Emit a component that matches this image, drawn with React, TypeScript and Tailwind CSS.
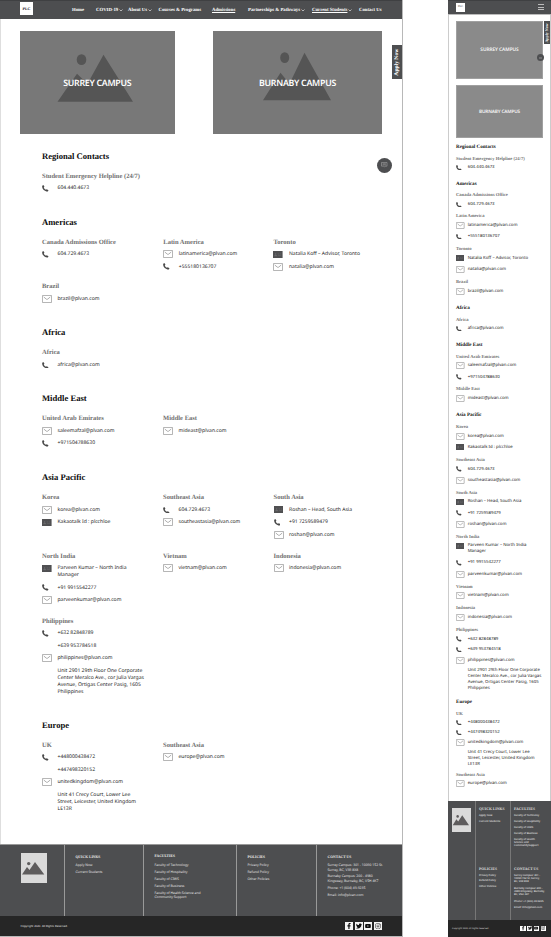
import React from "react";
import { FaFacebookF, FaTwitter, FaYoutube, FaInstagram } from "react-icons/fa";

type Kind = "phone" | "mail" | "card" | "none" | "phoneMobile";
type Item = { k: Kind; t: string[] };
type Group = { name: string; items: Item[]; m: string; row?: string };
type Section = { title: string; d: string; grid: string; m: string; groups: Group[] };

const ph = (...t: string[]): Item => ({ k: "phone", t });
const ml = (...t: string[]): Item => ({ k: "mail", t });
const cd = (...t: string[]): Item => ({ k: "card", t });
const no = (...t: string[]): Item => ({ k: "none", t });
const pm = (...t: string[]): Item => ({ k: "phoneMobile", t });

const sections: Section[] = [
  {
    title: "Regional Contacts", d: "h-[66px]", grid: "grid-cols-[121px_110.5px_110px]", m: "h-[36.8px]",
    groups: [{ name: "Student Emergency Helpline (24/7)", m: "h-[24px]", items: [ph("604.440.4673")] }],
  },
  {
    title: "Americas", d: "h-[110.5px]", grid: "grid-cols-[121.3px_110.2px_110px] grid-rows-[44.5px_30px]", m: "h-[124.2px]",
    groups: [
      { name: "Canada Admissions Office", m: "h-[21px]", items: [ph("604.729.4673")] },
      { name: "Latin America", m: "h-[33px]", items: [ml("latinamerica@plvan.com"), ph("+555180136707")] },
      { name: "Toronto", m: "h-[33px]", items: [cd("Natalia Koff – Advisor, Toronto"), ml("natalia@plvan.com")] },
      { name: "Brazil", m: "h-[24px]", items: [ml("brazil@plvan.com")] },
    ],
  },
  {
    title: "Africa", d: "h-[66px]", grid: "grid-cols-[121px_110.5px_110px]", m: "h-[37.3px]",
    groups: [{ name: "Africa", m: "h-[24px]", items: [ph("africa@plvan.com")] }],
  },
  {
    title: "Middle East", d: "h-[79px]", grid: "grid-cols-[121px_110.5px_110px]", m: "h-[70.3px]",
    groups: [
      { name: "United Arab Emirates", m: "h-[32.5px]", items: [ml("saleemafzal@plvan.com"), ph("+971504788630")] },
      { name: "Middle East", m: "h-[24px]", items: [ml("mideast@plvan.com")] },
    ],
  },
  {
    title: "Asia Pacific", d: "h-[247.5px]", grid: "grid-cols-[121px_110.5px_110px] grid-rows-[58.5px_65px_90px]", m: "h-[286.4px]",
    groups: [
      { name: "Korea", m: "h-[33px]", items: [ml("korea@plvan.com"), cd("Kakaotalk Id : plcchloe")] },
      { name: "Southeast Asia", m: "h-[32.7px]", items: [ph("604.729.4673"), ml("southeastasia@plvan.com")] },
      { name: "South Asia", m: "h-[44px]", items: [cd("Roshan – Head, South Asia"), ph("+91 7259589479"), ml("roshan@plvan.com")] },
      { name: "North India", m: "h-[50px]", items: [cd("Parveen Kumar – North India", "Manager"), ph("+91 9915542277"), ml("parveenkumar@plvan.com")], row: "min-h-[11.2px] first:min-h-[17px]" },
      { name: "Vietnam", m: "h-[21.3px]", items: [ml("vietnam@plvan.com")] },
      { name: "Indonesia", m: "h-[22px]", items: [ml("indonesia@plvan.com")] },
      {
        name: "Philippines", m: "h-[70px]", row: "min-h-[10.5px]",
        items: [
          ph("+632 82848789"), pm("+639 953784518"), ml("philippines@plvan.com"),
          no("Unit 2901 29th Floor One Corporate", "Center Meralco Ave., cor Julia Vargas", "Avenue, Ortigas Center Pasig, 1605", "Philippines"),
        ],
      },
    ],
  },
  {
    title: "Europe", d: "h-[129.5px]", grid: "grid-cols-[121px_110.5px_110px]", m: "h-[104.3px]",
    groups: [
      {
        name: "UK", m: "h-[61.2px]", row: "min-h-[10px]",
        items: [
          ph("+448000438472"), pm("+447498320152"), ml("unitedkingdom@plvan.com"),
          no("Unit 41 Crecy Court, Lower Lee", "Street, Leicester, United Kingdom", "LE13R"),
        ],
      },
      { name: "Southeast Asia", m: "h-[24px]", items: [ml("europe@plvan.com")] },
    ],
  },
];

function ContactIcon({ kind, mobile }: { kind: Kind; mobile?: boolean }) {
  if (kind === "phone" || (kind === "phoneMobile" && mobile))
    return (
      <svg viewBox="0 0 14 14" className={mobile ? "h-[5.6px] w-[5.6px]" : "h-[6.6px] w-[6.6px]"}>
        <path d="M.5 1.500 3 0l2.200 3.800-1.500 1.400c.9 2.300 2.500 4 4.800 4.900L10 8.800l3.800 2.100-1.400 2.700C5.500 14-.6 8 .5 1.500Z" fill="#484848" />
      </svg>
    );
  if (kind === "mail")
    return (
      <svg viewBox="0 0 20 16" className={mobile ? "h-[7px] w-[8.500px]" : "h-[8px] w-[10px]"} fill="none" stroke="#777" strokeWidth="1.200">
        <rect x=".8" y=".8" width="18.400" height="14.400" rx="1" />
        <path d="m3.500 4 5.200 4.300q1.300 1 2.600 0L16.500 4" />
      </svg>
    );
  if (kind === "card")
    return (
      <svg viewBox="0 0 20 15" className={mobile ? "h-[6px] w-[8px]" : "h-[7.2px] w-[9.600px]"}>
        <rect width="20" height="15" fill="#505052" />
        <path d="M3 10q2.500-3 5 0ZM10 6h3M14.500 6H17M10 9h7" stroke="#707073" fill="#707073" />
        <circle cx="5.500" cy="6" r="1.400" fill="#707073" />
      </svg>
    );
  return null;
}

function DesktopSection({ s }: { s: Section }) {
  return (
    <section className={s.d}>
      <h2 className="mb-[4px] h-[20px] whitespace-nowrap font-['Liberation_Serif',serif] text-[8.600px] leading-[20px] font-bold text-[#0c0c0c]">{s.title}</h2>
      <div className={"grid " + s.grid}>
        {s.groups.map((g, i) => (
          <div key={i} className="min-w-0">
            <h3 className="h-[12.700px] whitespace-nowrap font-['Liberation_Serif',serif] text-[6.550px] leading-[13px] font-bold text-[#707070]">{g.name}</h3>
            <ul>
              {g.items.map((it, j) => (
                <li key={j} className="flex min-h-[12.4px]">
                  <span className="flex h-[12.4px] w-[15.5px] shrink-0 items-center"><ContactIcon kind={it.k} /></span>
                  <span className="pt-[3.200px] pb-[2.200px] text-[5.060px] leading-[7px] whitespace-nowrap text-[#222]">
                    {it.t.map((l) => <span key={l} className="block">{l}</span>)}
                  </span>
                </li>
              ))}
            </ul>
          </div>
        ))}
      </div>
    </section>
  );
}

function MobileSection({ s }: { s: Section }) {
  return (
    <section className={s.m}>
      <h2 className="mb-[2.700px] h-[10px] whitespace-nowrap font-['Liberation_Serif',serif] text-[5.100px] leading-[10px] font-bold text-[#111]">{s.title}</h2>
      {s.groups.map((g, i) => (
        <div key={i} className={g.m}>
          <h3 className="h-[8px] whitespace-nowrap font-['Liberation_Serif',serif] text-[4.600px] leading-[8px] font-bold text-[#777]">{g.name}</h3>
          <ul>
            {g.items.map((it, j) => (
              <li key={j} className={"flex " + (g.row || "min-h-[11.200px]")}>
                <span className="flex h-[10px] w-[11.700px] shrink-0 items-center"><ContactIcon kind={it.k} mobile /></span>
                <span className="pt-[2.600px] text-[4.300px] leading-[5.800px] whitespace-nowrap text-[#222]">
                  {it.t.map((l) => <span key={l} className="block">{l}</span>)}
                </span>
              </li>
            ))}
          </ul>
        </div>
      ))}
    </section>
  );
}

const Chevron = () => (
  <svg viewBox="0 0 8 5" className="ml-[1px] h-[2.5px] w-[4px] shrink-0" fill="none" stroke="#eee" strokeWidth="1.3"><path d="m1 1 3 3 3-3" /></svg>
);

const nav = [
  { t: "Home", w: "w-[24px]" },
  { t: "COVID-19", w: "w-[32px]", c: true },
  { t: "About Us", w: "w-[30.5px]", c: true },
  { t: "Courses & Programs", w: "w-[53.5px]" },
  { t: "Admissions", w: "w-[36px]", u: true },
  { t: "Partnerships & Pathways", w: "w-[64px]", c: true },
  { t: "Current Students", w: "w-[47px]", c: true, u: true },
  { t: "Contact Us", w: "w-[30px]" },
];

type Block = { h: string; lines: string[] };
const one = (h: string, ...names: string[]): Block[] => names.map((n) => ({ h, lines: [n] }));

function FooterColumn({ title, blocks, className, mobile }: { title: string; blocks: Block[]; className: string; mobile?: boolean }) {
  return (
    <div className={className}>
      <h4 className={mobile ? "h-[7px] whitespace-nowrap font-['Liberation_Serif',serif] text-[3.800px] leading-[5px] font-bold text-[#ddd]" : "h-[8.500px] whitespace-nowrap font-['Liberation_Serif',serif] text-[3.700px] leading-[5px] font-bold text-[#eee]"}>{title}</h4>
      {blocks.map((b) => (
        <div key={b.lines[0]} className={b.h}>
          {b.lines.map((l) => (
            <div key={l} className={mobile ? "text-[2.600px] leading-[3.300px] font-medium whitespace-nowrap text-[#e5e5e5]" : "text-[3.360px] leading-[4.500px] whitespace-nowrap text-[#e2e2e2]"}>{l}</div>
          ))}
        </div>
      ))}
    </div>
  );
}

function Socials({ mobile }: { mobile?: boolean }) {
  const box = mobile ? "flex h-[5.500px] w-[5.500px] items-center justify-center bg-white text-[4.200px] text-[#222]" : "flex h-[8px] w-[8px] items-center justify-center bg-[#f4f4f4] text-[6px] text-[#111]";
  return (
    <div className={mobile ? "flex gap-[1.300px]" : "flex gap-[1.700px]"}>
      <span className={box}><FaFacebookF /></span>
      <span className={box}><FaTwitter /></span>
      <span className={box}><FaYoutube /></span>
      <span className={box}><FaInstagram /></span>
    </div>
  );
}

function FooterLogo({ className }: { className: string }) {
  return (
    <svg viewBox="0 0 26 30" preserveAspectRatio="none" className={className}>
      <rect width="26" height="30" fill="#dadada" />
      <circle cx="7.700" cy="10.600" r="1.700" fill="#5e5c5d" />
      <path d="M1 21.500 6 14l2.500 3L14 9l9.300 12.500Z" fill="#5e5c5d" />
    </svg>
  );
}

function Desktop() {
  return (
    <div className="flex h-[936.500px] w-[403px] shrink-0 flex-col border-r border-b border-[#b8b8b8] bg-white">
      <header className="flex h-[18.500px] shrink-0 items-center border-t border-[#3f4042] bg-[#4d4e50] pl-[20px]">
        <div className="mt-[-2px] mr-[39px] flex h-[13px] w-[13px] items-center justify-center bg-white font-['Liberation_Serif',serif] text-[4px] leading-none font-bold text-[#222]">PLC</div>
        <nav className="flex pt-[0.500px]">
          {nav.map((n) => (
            <span key={n.t} className={"flex shrink-0 items-center whitespace-nowrap font-['Liberation_Serif',serif] text-[4.750px] leading-[7px] font-bold text-white " + n.w}>
              <span className={n.u ? "underline decoration-[0.500px] underline-offset-[1px]" : ""}>{n.t}</span>
              {n.c && <Chevron />}
            </span>
          ))}
        </nav>
      </header>
      <main className="relative h-[825.500px] shrink-0 border-l border-[#dedede]">
        <div className="flex h-[127px] gap-[38.500px] pt-[12.500px] pl-[19px]">
          <div className="relative h-[103.300px] w-[154.500px] bg-[#787878]">
            <svg viewBox="20 31.5 154.5 103" className="h-full w-full" fill="#555">
              <ellipse cx="81.500" cy="60" rx="4.800" ry="5.400" />
              <path d="M57.500 102 77 74l10.500 10L103.500 55 133 102Z" />
            </svg>
            <span className="absolute inset-0 flex items-center justify-center pt-[1.500px] text-[8.800px] font-semibold tracking-[-0.270px] text-white">SURREY CAMPUS</span>
          </div>
          <div className="relative h-[103.300px] w-[169px] bg-[#787878]">
            <svg viewBox="213 31.5 169 103" className="h-full w-full" fill="#555">
              <ellipse cx="284.700" cy="58" rx="4.500" ry="5.400" />
              <path d="M263 100.500 280.500 73l9 11L304.500 53 331 100.500Z" />
            </svg>
            <span className="absolute inset-0 flex items-center justify-center pt-[1.500px] text-[8.800px] font-semibold tracking-[-0.270px] text-white">BURNABY CAMPUS</span>
          </div>
        </div>
        <div className="pl-[41px]">{sections.map((s) => <DesktopSection key={s.title} s={s} />)}</div>
        <div className="absolute top-[26.500px] right-0 flex h-[34px] w-[10px] items-center justify-center bg-[#4d4e50]">
          <span className="-rotate-90 whitespace-nowrap font-['Liberation_Serif',serif] text-[5.600px] font-bold text-white">Apply Now</span>
        </div>
        <div className="absolute top-[139px] right-[10px] flex h-[15px] w-[15px] items-center justify-center rounded-full bg-[#4d4e50]">
          <svg viewBox="0 0 14 12" className="h-[5.500px] w-[6.500px]" fill="none" stroke="#aaa" strokeWidth="1.200"><path d="M1 1h12v8H9l-2 2-2-2H1ZM3.500 4h7M3.500 6.300h7" /></svg>
        </div>
      </main>
      <footer className="shrink-0">
        <div className="flex h-[72px] border-t border-[#999] bg-[#4d4e50]">
          <div className="w-[64px] pt-[8px] pl-[20.500px]"><FooterLogo className="h-[30px] w-[26px]" /></div>
          <FooterColumn className="w-[79px] border-l border-[#999] pt-[9.500px] pl-[10.500px]" title="QUICK LINKS" blocks={one("h-[7px]", "Apply Now", "Current Students")} />
          <FooterColumn className="w-[93px] border-l border-[#999] pt-[9px] pl-[10.500px]" title="FACULTIES" blocks={[...one("h-[7px]", "Faculty of Technology", "Faculty of  Hospitality", "Faculty of CIWS", "Faculty of Business"), { h: "h-[9px]", lines: ["Faculty of Health Science and", "Community Support"] }]} />
          <FooterColumn className="w-[80px] border-l border-[#999] pt-[9.500px] pl-[10.500px]" title="POLICIES" blocks={one("h-[7px]", "Privacy Policy", "Refund Policy", "Other Policies")} />
          <FooterColumn className="w-[86px] border-l border-[#999] pt-[9.500px] pl-[10.500px]" title="CONTACT US" blocks={[
            { h: "h-[11px]", lines: ["Surrey Campus: 301 - 10090 152 St.", "Surrey, BC, V3R 8X8"] },
            { h: "h-[11.500px]", lines: ["Burnaby Campus: 200 - 4980", "Kingsway, Burnaby, BC, V5H 4K7"] },
            ...one("h-[7px]", "Phone: +1 (604) 49-9235", "Email: info@plvan.com"),
          ]} />
        </div>
        <div className="flex h-[20px] items-center justify-between bg-[#262626] pr-[20px] pl-[20.500px]">
          <span className="text-[2.750px] leading-[4px] font-medium text-[#ddd]">Copyright 2020. All Rights Reserved.</span>
          <Socials />
        </div>
      </footer>
    </div>
  );
}

function Mobile() {
  return (
    <div className="flex h-[937px] w-[103px] shrink-0 flex-col bg-white">
      <header className="flex h-[14.500px] shrink-0 items-center justify-between border-t border-b border-t-[#3f4042] border-b-[#bbb] bg-[#4d4e50] pr-[7.500px] pl-[8px]">
        <div className="flex h-[9px] w-[9px] items-center justify-center bg-white font-['Liberation_Serif',serif] text-[2.600px] font-bold text-[#555]">PLC</div>
        <div className="flex w-[6px] flex-col gap-[1.500px]">
          <span className="h-[1px] bg-[#bbb]" /><span className="h-[1px] bg-[#bbb]" /><span className="h-[1px] bg-[#bbb]" />
        </div>
      </header>
      <main className="relative h-[786.500px] shrink-0 border-r border-l border-[#ccc] pl-[7px]">
        <div className="flex h-[127.400px] flex-col gap-[6px] pt-[6.500px]">
          <div className="flex h-[58px] w-[87px] shrink-0 items-center justify-center border border-[#a0a0a0] bg-[#8a8a8a] pt-[2px] text-[4.800px] font-semibold tracking-[-0.060px] text-[#f5f5f5]">SURREY CAMPUS</div>
          <div className="flex h-[53px] w-[87px] shrink-0 items-center justify-center border border-[#a0a0a0] bg-[#8a8a8a] pt-[2px] text-[4.700px] font-semibold tracking-[-0.150px] text-[#f5f5f5]">BURNABY CAMPUS</div>
        </div>
        {sections.map((s) => <MobileSection key={s.title} s={s} />)}
        <div className="absolute top-[6.500px] right-0 flex h-[23px] w-[6px] items-center justify-center bg-[#4d4e50]">
          <span className="-rotate-90 whitespace-nowrap font-['Liberation_Serif',serif] text-[4px] font-bold text-white">Apply Now</span>
        </div>
        <div className="absolute top-[39.500px] right-[6px] flex h-[7px] w-[7px] items-center justify-center rounded-full bg-[#4d4e50]"><span className="h-[2px] w-[3px] bg-[#6e6e70]" /></div>
      </main>
      <footer className="shrink-0">
        <div className="flex h-[119px] bg-[#4d4e50]">
          <div className="w-[27px] pt-[7px] pl-[4px]"><FooterLogo className="h-[24px] w-[19px]" /></div>
          <div className="w-[35px] border-l border-[#777] pt-[6px] pl-[3px]">
            <FooterColumn mobile className="h-[59.500px]" title="QUICK LINKS" blocks={one("h-[5.900px]", "Apply Now", "Current Students")} />
            <FooterColumn mobile className="h-[50px]" title="POLICIES" blocks={one("h-[5.800px]", "Privacy Policy", "Refund Policy", "Other Policies")} />
          </div>
          <div className="w-[41px] border-l border-[#777] pt-[6px] pl-[3px]">
            <FooterColumn mobile className="h-[59.500px]" title="FACULTIES" blocks={[...one("h-[5.900px]", "Faculty of Technoloy", "Faculty of Hospitality", "Faculty of CIWS", "Faculty of Business"), { h: "h-[10px]", lines: ["Faculty of Health", "Science and", "CommunitySupport"] }]} />
            <FooterColumn mobile className="h-[50px]" title="CONTACT US" blocks={[
              { h: "h-[13.300px]", lines: ["Surrey Campus: 301 -", "10090 152 St, Surrey,", "BC, V3R 8X8"] },
              { h: "h-[13px]", lines: ["Burnaby Campus: 200 -", "4980 Kingsway, Burnaby,", "BC, V5H 4K7"] },
              ...one("h-[6px]", "Phone: +1 (604) 49-9235", "Email: info@plvan.com"),
            ]} />
          </div>
        </div>
        <div className="flex h-[17px] items-center justify-between bg-[#262626] pr-[5px] pl-[4px]">
          <span className="text-[2.200px] leading-[3px] whitespace-nowrap text-[#ddd]">Copyright 2020. All Rights Reserved.</span>
          <Socials mobile />
        </div>
      </footer>
    </div>
  );
}

export default function App() {
  return (
    <div className="flex h-[937px] w-[551px] justify-between overflow-hidden bg-white font-['Noto_Sans',sans-serif] [text-rendering:geometricPrecision]">
      <Desktop />
      <Mobile />
    </div>
  );
}
